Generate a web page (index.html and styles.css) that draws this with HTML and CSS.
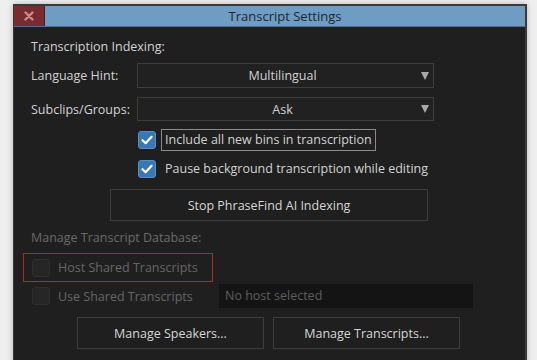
FILE: index.html
```html
<!DOCTYPE html>
<html>
<head>
<meta charset="utf-8">
<link rel="stylesheet" href="styles.css">
</head>
<body>
<div class="window">
  <div class="titlebar">
    <div class="close"><svg width="10" height="10" viewBox="0 0 10 10"><path d="M1.5 1.5 L8.5 8.5 M8.5 1.5 L1.5 8.5" stroke="#c98e90" stroke-width="2.4" stroke-linecap="round"/></svg></div>
    <div class="title">Transcript Settings</div>
  </div>
  <div class="content">
    <div class="heading">Transcription Indexing:</div>
    <div class="field first">
      <div class="label">Language Hint:</div>
      <div class="select"><span>Multilingual</span><i class="arrow"></i></div>
    </div>
    <div class="field second">
      <div class="label">Subclips/Groups:</div>
      <div class="select"><span>Ask</span><i class="arrow"></i></div>
    </div>
    <div class="check-row focus-row">
      <div class="checkbox on"><svg width="18" height="18" viewBox="0 0 18 18"><path d="M4.5 9.2 L7.6 12.2 L13.6 5.8" fill="none" stroke="#fff" stroke-width="2.2" stroke-linecap="round" stroke-linejoin="round"/></svg></div>
      <div class="check-label focused">Include all new bins in transcription</div>
    </div>
    <div class="check-row pause-row">
      <div class="checkbox on"><svg width="18" height="18" viewBox="0 0 18 18"><path d="M4.5 9.2 L7.6 12.2 L13.6 5.8" fill="none" stroke="#fff" stroke-width="2.2" stroke-linecap="round" stroke-linejoin="round"/></svg></div>
      <div class="check-label">Pause background transcription while editing</div>
    </div>
    <div class="stop-wrap"><div class="button stop">Stop PhraseFind AI Indexing</div></div>
    <div class="heading dim db-heading">Manage Transcript Database:</div>
    <div class="host-box">
      <div class="checkbox off"></div>
      <div class="dim-label">Host Shared Transcripts</div>
    </div>
    <div class="use-row">
      <div class="checkbox off"></div>
      <div class="dim-label use-label">Use Shared Transcripts</div>
      <div class="host-input">No host selected</div>
    </div>
    <div class="button-row">
      <div class="button">Manage Speakers...</div>
      <div class="button">Manage Transcripts...</div>
    </div>
  </div>
</div>
</body>
</html>
```

FILE: styles.css
```css
html, body {
  margin: 0;
  padding: 0;
}
body {
  background: #efefef;
  font-family: "Open Sans", "DejaVu Sans", sans-serif;
  font-size: 12.5px;
  color: #d2d2d2;
  height: 360px;
  overflow: hidden;
  padding: 4px 0 0 13px;
  box-sizing: border-box;
}
.window {
  width: 514px;
  height: 380px;
  box-sizing: border-box;
  border: 2px solid #3a3a3a;
  border-left-width: 1px;
  background: #1f1f1f;
  box-shadow: 0 0 6px rgba(0,0,0,0.25);
}
.titlebar {
  height: 20px;
  display: flex;
  background: #6e9cc2;
  border-bottom: 1px solid #4f6f8a;
}
.close {
  width: 30px;
  background: #7a2b2d;
  display: flex;
  align-items: center;
  justify-content: center;
  border-right: 1px solid #3d2020;
}
.close svg {
  display: block;
}
.title {
  flex: 1;
  text-align: center;
  color: #1d2630;
  font-size: 13px;
  line-height: 20px;
}
.content {
  padding: 0 0 0 17px;
  position: relative;
}
.heading {
  line-height: 18px;
  margin-top: 11px;
}
.dim {
  color: #6a6a6a;
}
.field {
  display: flex;
  align-items: center;
}
.field.first { margin-top: 7px; height: 25px; }
.field.second { margin-top: 9px; height: 24px; }
.label {
  width: 106px;
}
.select {
  width: 297px;
  height: 100%;
  box-sizing: border-box;
  border: 1px solid #3d3d3d;
  background: #212121;
  display: flex;
  align-items: center;
  justify-content: center;
  position: relative;
  padding-right: 6px;
}
.arrow {
  position: absolute;
  right: 4px;
  top: 50%;
  margin-top: -4px;
  width: 0;
  height: 0;
  border-left: 4px solid transparent;
  border-right: 4px solid transparent;
  border-top: 8px solid #a8a8a8;
}
.check-row {
  display: flex;
  align-items: center;
  margin-left: 107px;
}
.focus-row { margin-top: 8px; height: 22px; }
.pause-row { margin-top: 8px; height: 20px; }
.checkbox {
  width: 18px;
  height: 18px;
  box-sizing: border-box;
  border-radius: 3px;
  flex: none;
}
.checkbox.on {
  background: #3a78b5;
  border: 1px solid #5b8fc4;
}
.checkbox.on svg {
  display: block;
  margin: -1px;
}
.checkbox.off {
  background: #262626;
  border: 1px solid #2f2f2f;
}
.check-label {
  margin-left: 5px;
  line-height: 20px;
  padding: 0 3px;
  border: 1px solid transparent;
}
.check-label.focused {
  border-color: #8a8a8a;
}
.stop-wrap {
  margin-top: 10px;
  padding-left: 79px;
}
.button {
  height: 32px;
  box-sizing: border-box;
  border: 1px solid #3e3e3e;
  background: #1f1f1f;
  display: flex;
  align-items: center;
  justify-content: center;
  color: #d6d6d6;
}
.stop {
  width: 318px;
}
.db-heading {
  margin-top: 8px;
}
.host-box {
  margin-top: 6px;
  margin-left: -8px;
  width: 190px;
  height: 29px;
  box-sizing: border-box;
  border: 1px solid #b02a2a;
  display: flex;
  align-items: center;
  padding-left: 8px;
}
.dim-label {
  color: #666;
  margin-left: 8px;
}
.use-row {
  margin-top: 2px;
  height: 24px;
  display: flex;
  align-items: center;
  padding-left: 1px;
}
.use-label {
  width: 161px;
}
.host-input {
  width: 254px;
  height: 24px;
  box-sizing: border-box;
  background: #141414;
  color: #5e5e5e;
  line-height: 24px;
  padding-left: 6px;
}
.button-row {
  margin-top: 9px;
  padding-left: 46px;
  display: flex;
  gap: 9px;
}
.button-row .button {
  width: 187px;
}
```
